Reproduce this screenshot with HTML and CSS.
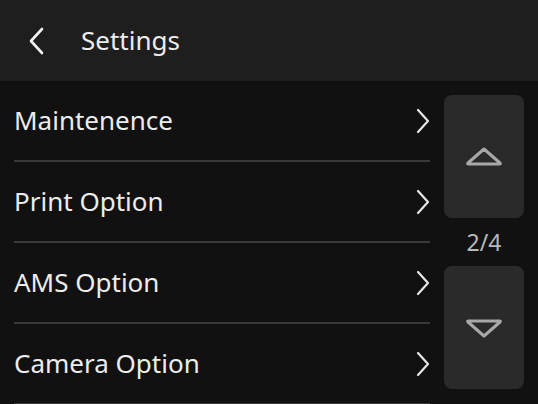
FILE: index.html
```html
<!DOCTYPE html>
<html>
<head>
<meta charset="utf-8">
<link rel="stylesheet" href="styles.css">
</head>
<body>
<div class="screen">
  <header class="topbar">
    <svg class="back" width="20" height="30" viewBox="0 0 20 30"><path d="M13 3 L2 15 L13 27" fill="none" stroke="#f2f2f2" stroke-width="2.6" stroke-linecap="round" stroke-linejoin="round"/></svg>
    <span class="title">Settings</span>
  </header>
  <main class="content">
    <ul class="list">
      <li class="row"><span class="label">Maintenence</span><svg class="chev" width="16" height="26" viewBox="0 0 16 26"><path d="M3 2 L13 13 L3 24" fill="none" stroke="#e6e6e6" stroke-width="2.2" stroke-linecap="round" stroke-linejoin="round"/></svg></li>
      <li class="row"><span class="label">Print Option</span><svg class="chev" width="16" height="26" viewBox="0 0 16 26"><path d="M3 2 L13 13 L3 24" fill="none" stroke="#e6e6e6" stroke-width="2.2" stroke-linecap="round" stroke-linejoin="round"/></svg></li>
      <li class="row"><span class="label">AMS Option</span><svg class="chev" width="16" height="26" viewBox="0 0 16 26"><path d="M3 2 L13 13 L3 24" fill="none" stroke="#e6e6e6" stroke-width="2.2" stroke-linecap="round" stroke-linejoin="round"/></svg></li>
      <li class="row"><span class="label">Camera Option</span><svg class="chev" width="16" height="26" viewBox="0 0 16 26"><path d="M3 2 L13 13 L3 24" fill="none" stroke="#e6e6e6" stroke-width="2.2" stroke-linecap="round" stroke-linejoin="round"/></svg></li>
    </ul>
    <aside class="pager">
      <div class="pbtn">
        <svg width="40" height="24" viewBox="0 0 40 24"><path d="M20 4 L36 18 Q37 19 35.5 19 L4.5 19 Q3 19 4 18 Z" fill="none" stroke="#a8a8a8" stroke-width="3" stroke-linejoin="round"/></svg>
      </div>
      <div class="page">2/4</div>
      <div class="pbtn">
        <svg width="40" height="24" viewBox="0 0 40 24"><path d="M20 20 L36 6 Q37 5 35.5 5 L4.5 5 Q3 5 4 6 Z" fill="none" stroke="#a8a8a8" stroke-width="3" stroke-linejoin="round"/></svg>
      </div>
    </aside>
  </main>
</div>
</body>
</html>
```

FILE: styles.css
```css
* { box-sizing: border-box; }
html, body { margin: 0; padding: 0; }
body {
  background: #111111;
  font-family: "Noto Sans", "Open Sans", sans-serif;
  color: #eeeeee;
}
.screen {
  width: 538px;
  height: 404px;
  overflow: hidden;
  display: flex;
  flex-direction: column;
}
.topbar {
  height: 81px;
  flex: none;
  background: #1e1e1e;
  display: flex;
  align-items: center;
  padding-left: 29px;
}
.back { display: block; }
.title {
  margin-left: 32px;
  font-size: 26px;
  line-height: 1;
  color: #ececec;
  padding-bottom: 2px;
}
.content {
  flex: 1;
  display: flex;
  padding-left: 14px;
}
.list {
  list-style: none;
  margin: 0;
  padding: 0;
  width: 416px;
}
.row {
  height: 81px;
  border-bottom: 2px solid #3a3a3a;
  display: flex;
  align-items: center;
  justify-content: space-between;
}
.label {
  font-size: 26px;
  line-height: 1;
  color: #ececec;
  padding-bottom: 2px;
}
.chev { display: block; margin-right: -1px; }
.pager {
  margin-left: 14px;
  width: 80px;
  padding-top: 14px;
  display: flex;
  flex-direction: column;
}
.pbtn {
  height: 123px;
  background: #2a2a2a;
  border-radius: 8px;
  display: flex;
  align-items: center;
  justify-content: center;
}
.page {
  height: 48px;
  display: flex;
  align-items: center;
  justify-content: center;
  font-size: 23px;
  color: #b8b8b8;
}
```
